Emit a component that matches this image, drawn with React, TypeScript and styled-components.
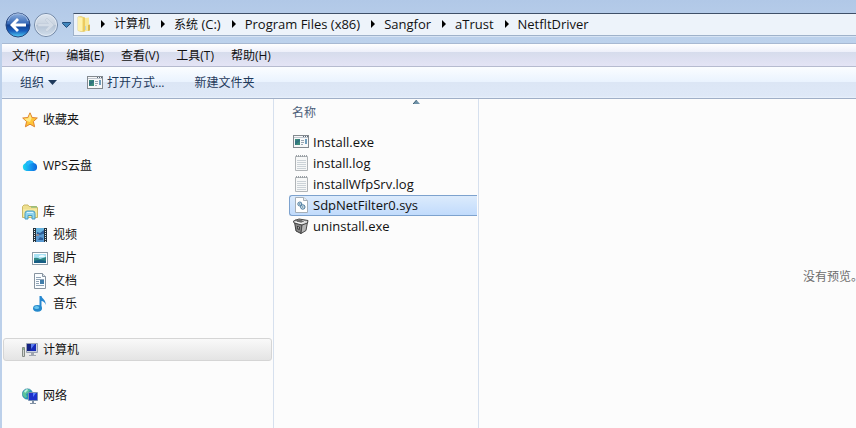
import React from "react";
import styled, { createGlobalStyle, css } from "styled-components";

const GlobalStyle = createGlobalStyle`
  * { box-sizing: border-box; }
  body { margin: 0; }
`;

const cjk = `"Noto Sans CJK SC", sans-serif`;

const Window = styled.div`
  display: flex;
  flex-direction: column;
  height: 100vh;
  overflow: hidden;
  background: #bcd0ea;
  font: 12px/16px "Open Sans", ${cjk};
  color: #111;
`;

const plainButton = css`
  border: 0;
  padding: 0;
  margin: 0;
  background: none;
  font: inherit;
  color: inherit;
  white-space: nowrap;
  cursor: default;
`;

const NavigationBar = styled.header`
  display: flex;
  flex: none;
  align-items: flex-start;
  height: 43px;
  padding: 13px 0 0 4px;
  background: linear-gradient(#b1c8e7, #bdd2ec);
`;

const NavButtons = styled.div`
  display: flex;
  align-items: center;
  width: 69px;
  flex: none;
`;

const NavButton = styled.button<{ $wide?: boolean }>`
  ${plainButton}
  display: flex;
  flex: none;
  justify-content: center;
  align-items: center;
  width: ${(p) => (p.$wide ? 28 : 13)}px;
  height: 24px;
`;

const AddressBar = styled.nav`
  display: flex;
  flex: 1;
  align-items: center;
  height: 23px;
  padding: 0 0 1px 3px;
  background: #edf3fa;
  border: 1px solid #9fb2ca;
  border-top-color: #3f5068;
  border-right: 0;
  box-shadow: 0 1px 0 #d6e3f4;
`;

const Crumb = styled.button`
  ${plainButton}
  white-space: pre;
`;

const Latin = styled.span`
  font-size: 13px;
`;

const CrumbArrow = styled.svg<{ $first?: boolean }>`
  flex: none;
  margin: 0 9px 0 ${(p) => (p.$first ? 8 : 11)}px;
`;

const MenuBar = styled.nav`
  display: flex;
  flex: none;
  align-items: center;
  gap: 17px;
  height: 24px;
  margin-left: 2px;
  padding: 2px 0 0 10px;
  border-top: 1px solid #a8b9d2;
  border-bottom: 1px solid #b6bbcf;
  background: linear-gradient(#fff 0, #eef0fa 35%, #d6dcec 36%, #e4e4f5 100%);
`;

const MenuItem = styled.button`
  ${plainButton}
`;

const Toolbar = styled.div`
  display: flex;
  flex: none;
  align-items: center;
  gap: 30px;
  height: 32px;
  margin-left: 2px;
  padding-left: 18px;
  border-bottom: 1px solid #a0afc7;
  background: linear-gradient(#fbfdff 0, #eaf3fe 48%, #dce6f5 49%, #dee8f7 94%, #e9f1fb 100%);
  color: #1e395b;
`;

const ToolButton = styled.button`
  ${plainButton}
  display: flex;
  align-items: center;
  gap: 4px;
`;

const Content = styled.main`
  display: flex;
  flex: 1;
  min-height: 0;
  margin-left: 2px;
  background: #fcfcfc;
`;

const Sidebar = styled.nav`
  display: flex;
  flex: none;
  flex-direction: column;
  gap: 23px;
  width: 272px;
  padding: 9px 1px 0;
  border-right: 1px solid #d6e0ee;
`;

const Group = styled.div`
  display: flex;
  flex-direction: column;
`;

const Place = styled.button<{ $nested?: boolean; $selected?: boolean }>`
  ${plainButton}
  display: flex;
  align-items: center;
  gap: 5px;
  height: 23px;
  padding-left: ${(p) => (p.$nested ? 28 : 18)}px;
  border: 1px solid transparent;
  border-radius: 3px;
  ${(p) =>
    p.$selected &&
    css`
      border-color: #d5d5d5;
      background: linear-gradient(#f9f9f9, #e4e4e4);
    `}
`;

const Files = styled.section`
  flex: none;
  width: 205px;
  padding: 0 1px 0 15px;
  border-right: 1px solid #d6e0ee;
`;

const FileTable = styled.table`
  width: 100%;
  border-collapse: collapse;
`;

const NameHeader = styled.th`
  position: relative;
  height: 33px;
  padding: 0 0 6px 3px;
  color: #4c607a;
  font-weight: 400;
  text-align: left;
`;

const SortArrow = styled.svg`
  position: absolute;
  top: 1px;
  left: 124px;
`;

const FileCell = styled.td`
  padding: 0;
`;

const FileButton = styled.button<{ $selected?: boolean }>`
  ${plainButton}
  display: flex;
  align-items: center;
  gap: 4px;
  width: 100%;
  height: 21px;
  padding: 0 0 1px 3px;
  border: 1px solid transparent;
  border-right: 0;
  border-radius: 3px 0 0 3px;
  font-size: 13px;
  ${(p) =>
    p.$selected &&
    css`
      border-color: #7da2ce;
      background: linear-gradient(#dcebfc, #c1dbfc);
    `}
`;

const Preview = styled.section`
  flex: 1;
  min-width: 0;
  overflow: hidden;
`;

const PreviewMessage = styled.p`
  display: flex;
  align-items: center;
  justify-content: center;
  min-width: 708px;
  min-height: 356px;
  margin: 0;
  color: #6d6d6d;
`;

const Icon = ({ children }: { children: React.ReactNode }) => (
  <svg width="16" height="16" viewBox="0 0 16 16" aria-hidden="true">
    {children}
  </svg>
);

const BackIcon = () => (
  <svg width="26" height="26" viewBox="0 0 26 26" aria-hidden="true">
    <defs>
      <linearGradient id="back" x2="0" y2="1">
        <stop offset="0" stopColor="#91b2df" />
        <stop offset=".45" stopColor="#3668b6" />
        <stop offset=".5" stopColor="#12408f" />
        <stop offset=".75" stopColor="#1a5fbd" />
        <stop offset="1" stopColor="#52d0f6" />
      </linearGradient>
    </defs>
    <circle cx="13" cy="13" r="12" fill="url(#back)" stroke="#29477e" />
    <path d="M3 9a10.500 10.500 0 0 1 20 0" fill="none" stroke="#c5d6ee" strokeOpacity=".7" />
    <path d="M5 13l7-7 2 2-3.500 3.500H21v3H10.500L14 18l-2 2z" fill="#fff" />
  </svg>
);

const ForwardIcon = () => (
  <svg width="26" height="26" viewBox="0 0 26 26" aria-hidden="true">
    <defs>
      <linearGradient id="forward" x2="0" y2="1">
        <stop offset="0" stopColor="#dde6f0" />
        <stop offset=".48" stopColor="#c9d3df" />
        <stop offset=".5" stopColor="#b3c2d4" />
        <stop offset="1" stopColor="#d2dfec" />
      </linearGradient>
    </defs>
    <circle cx="13" cy="13" r="11.500" fill="url(#forward)" stroke="#7288a6" />
    <circle cx="13" cy="13" r="10.500" fill="none" stroke="#e6eef7" strokeOpacity=".8" />
    <path d="M21 13l-7-7-2 2 3.500 3.500H5v3h10.500L12 18l2 2z" fill="#d3dce7" stroke="#bac7d6" strokeWidth=".5" />
  </svg>
);

const HistoryIcon = () => (
  <svg width="9" height="6" viewBox="0 0 9 6" aria-hidden="true">
    <path d="M.5.500h8v1L4.500 5.500.5 1.500z" fill="#4086bd" stroke="#234f7d" />
  </svg>
);

const FolderIcon = () => (
  <Icon>
    <path d="M1 1l3-.5 4 1.500v13l-3 .8-4-1.300z" fill="#f7e389" stroke="#dfc25a" strokeWidth=".6" />
    <path d="M1 1l4 1v13.200l-4-.8z" fill="#fff2ad" />
    <path d="M6 1.500l5 1v12l-5 1z" fill="#eccb60" />
    <path d="M8 2l4-.5V14l-4 1.500z" fill="#f8e898" />
    <path d="M11 9l2-.5v6l-2 .5z" fill="#d9b750" />
    <path d="M8.500 10v4" stroke="#b9d3d9" />
  </Icon>
);

const AppIcon = () => (
  <Icon>
    <rect x=".5" y="1.500" width="15" height="12" fill="#f7f8f9" stroke="#83898f" />
    <path d="M1 3.500h14" stroke="#c0c6ce" />
    <path d="M10 2.500h1m1 0h1m1 0h1" stroke="#596877" />
    <rect x="2" y="5" width="5" height="6" fill="#3d8b7b" />
    <path d="M2 11V7l5-2v2z" fill="#317380" />
    <path d="M8 6.500h3M8 8.500h3M8 10.500h2" stroke="#9ba7b2" />
    <path d="M13 5v5" stroke="#4380a9" strokeWidth="1.500" />
  </Icon>
);

const StarIcon = () => (
  <Icon>
    <path d="M8 .8l2.100 4.700 5.200.5-3.900 3.500 1.200 5.300L8 12.200l-4.600 2.600 1.200-5.300L.7 6l5.200-.5z" fill="#ffc538" stroke="#df8430" strokeLinejoin="round" />
    <path d="M8 2l1.500 4.200L8 10 4.900 9 2 6.700l4.300-.5z" fill="#ffe985" />
  </Icon>
);

const CloudIcon = () => (
  <Icon>
    <defs>
      <linearGradient id="cloud">
        <stop offset="0" stopColor="#1cd9ef" />
        <stop offset=".5" stopColor="#159bf2" />
        <stop offset="1" stopColor="#0b65db" />
      </linearGradient>
    </defs>
    <path d="M4.500 13A4 4 0 0 1 3.400 5.300 4.700 4.700 0 0 1 11.800 5a4.100 4.100 0 0 1 .2 8z" fill="url(#cloud)" />
    <path d="M3.400 5.300A4.700 4.700 0 0 1 11.800 5C9 5 7 6 6 8 5 6 4 5.500 3.400 5.300z" fill="#23b6fb" />
  </Icon>
);

const LibraryIcon = () => (
  <Icon>
    <path d="M.5 2.500L2 1h4l1 1.500h7l1.500 1v10H.5z" fill="#efe090" stroke="#cbb966" />
    <path d="M9 3h6" stroke="#91bd7b" strokeWidth="1.500" />
    <path d="M1 5h14v8H1z" fill="#f5e99f" />
    <path d="M3 15V9.500Q3 7 5 7h6q2 0 2 2.500V15h-3v-3.500H6V15z" fill="#91d5ef" stroke="#4b9bbd" />
    <path d="M5 8.500h6" stroke="#d9f5ff" />
  </Icon>
);

const VideoIcon = () => (
  <Icon>
    <path d="M1 1h14v14H1z" fill="#25313a" />
    <path d="M4 1h8v7H4z" fill="#68b4df" />
    <path d="M4 8h8v7H4z" fill="#5a9ad2" />
    <path d="M5 5l3 1 4-3v4l-4 1-3-1zM6 13l2-3 3 1v2z" fill="#2f5f9b" />
    <path d="M4 8h3" stroke="#be7d65" />
    <path d="M2.500 2v13M13.500 2v13" stroke="#e8eff2" strokeDasharray="1 1" />
  </Icon>
);

const PictureIcon = () => (
  <Icon>
    <rect x=".5" y="2.500" width="15" height="12" fill="#fff" stroke="#8d9ca7" />
    <path d="M2 4h12v9H2z" fill="#a9e2f4" />
    <path d="M2 8q3-1 6 1 3-1 6-2v6H2z" fill="#2e8783" />
    <path d="M2 11q5-2 12 0v2H2z" fill="#185e84" />
    <path d="M7 6q3-2 6 0v1H7z" fill="#effcff" />
  </Icon>
);

const DocumentIcon = () => (
  <Icon>
    <path d="M2.500.5h8l3 3v12h-11z" fill="#fafdff" stroke="#87939f" />
    <path d="M10.500.5v3h3" fill="#dbe4ec" stroke="#87939f" />
    <path d="M4 4.500h5M4 6.500h8M4 8.500h3M4 10.500h3M4 12.500h8" stroke="#91a4b6" />
    <path d="M8 7h4v4H8z" fill="#407daa" />
  </Icon>
);

const MusicIcon = () => (
  <Icon>
    <path d="M7.500 12V0h2c.5 3 5 4 4 9-.5-3-2.500-4-4-4v7z" fill="#2687cf" />
    <ellipse cx="5.500" cy="12.300" rx="4.500" ry="3.400" fill="#2589cc" />
    <ellipse cx="4.600" cy="11.400" rx="2.500" ry="1.500" fill="#69c6ee" />
  </Icon>
);

const ComputerIcon = () => (
  <Icon>
    <path d="M.5 5.500h2v9h-2z" fill="#d3d6d3" stroke="#858b85" />
    <path d="M1 7h1" stroke="#47a848" />
    <path d="M4.500 1.500h11v9h-11z" fill="#c9d0df" stroke="#9aa2b4" />
    <path d="M5 2h9v7H5z" fill="#1629b7" />
    <path d="M5 2h5L8 9H5z" fill="#132182" />
    <path d="M9 2h4l-4 5z" fill="#5c7ef1" />
    <path d="M9 11h3v2h2v1H7v-1h2z" fill="#a0a6b1" />
  </Icon>
);

const NetworkIcon = () => (
  <Icon>
    <circle cx="5.500" cy="6" r="5.300" fill="#2494b8" stroke="#4187a0" strokeWidth=".5" />
    <path d="M1 4l4-3 3 1-2 3-2 1 1 3-2 1L.7 7z" fill="#5bc39a" />
    <path d="M2 3l3-2 1 1-3 3z" fill="#c0f3e2" />
    <path d="M6.500 4.500h9v8h-9z" fill="#b6c6dd" stroke="#7890b0" />
    <path d="M7 5h8v7H7z" fill="#1a31cc" />
    <path d="M11 5h3l-3 4z" fill="#577fff" />
    <path d="M10 13h2v2h2v1H8v-1h2z" fill="#8191a5" />
  </Icon>
);

const LogIcon = () => (
  <Icon>
    <path d="M2.500 1.500h12v14h-12z" fill="#f7f8f8" stroke="#b0b4b7" />
    <path d="M3 1h11" stroke="#9ba1a6" strokeWidth="2" strokeDasharray="1 1" />
    <path d="M4 5.500h9M4 7.500h9M4 9.500h9M4 11.500h9M4 13.500h9" stroke="#cbd2d7" />
  </Icon>
);

const SystemIcon = () => (
  <Icon>
    <path d="M2.500.5h8l4 3v12h-12z" fill="#fff" stroke="#a5afb8" />
    <path d="M10.500.5v3h4" fill="#e5ebf0" stroke="#a5afb8" />
    <circle cx="6.800" cy="7" r="2" fill="#dcecf5" stroke="#4b7ba0" />
    <circle cx="9.800" cy="10" r="2.200" fill="#e8f3f8" stroke="#3f7096" />
    <circle cx="6.800" cy="7" r=".7" fill="#386985" />
    <circle cx="9.800" cy="10" r=".7" fill="#386985" />
  </Icon>
);

const UninstallIcon = () => (
  <Icon>
    <path d="M1.500 4L9 6.500 8 15.500 3 13z" fill="#858585" stroke="#3a3a3a" />
    <path d="M9 6.500L14.500 4 13 12.500l-5 3z" fill="#b5b5b5" stroke="#4a4a4a" />
    <path d="M.5 3L6 1l9 1.500-.5 2.500L9 7 1 5z" fill="#d6d6d6" stroke="#444" />
    <path d="M2 1l3 1 2-1 3 2 3-1-3 3-6-1z" fill="#6a6a6a" />
    <path d="M3 4l5 1.500 4-2" fill="none" stroke="#fff" />
    <path d="M4 8l3 1-.5 3L4 11z" fill="#303030" />
    <path d="M5 9l1 .5-.4 1.200-1-.5z" fill="#ddd" />
  </Icon>
);

const crumbs = [
  { chinese: "计算机" },
  { chinese: "系统", latin: " (C:)" },
  { latin: "Program Files (x86)" },
  { latin: "Sangfor" },
  { latin: "aTrust" },
  { latin: "NetfltDriver" },
] as { chinese?: string; latin?: string }[];

const menus = ["文件(F)", "编辑(E)", "查看(V)", "工具(T)", "帮助(H)"];

const places = [
  [{ label: "收藏夹", icon: <StarIcon /> }],
  [{ label: "WPS云盘", icon: <CloudIcon /> }],
  [
    { label: "库", icon: <LibraryIcon /> },
    { label: "视频", icon: <VideoIcon />, nested: true },
    { label: "图片", icon: <PictureIcon />, nested: true },
    { label: "文档", icon: <DocumentIcon />, nested: true },
    { label: "音乐", icon: <MusicIcon />, nested: true },
  ],
  [{ label: "计算机", icon: <ComputerIcon />, selected: true }],
  [{ label: "网络", icon: <NetworkIcon /> }],
] as { label: string; icon: React.ReactNode; nested?: boolean; selected?: boolean }[][];

const files = [
  { name: "Install.exe", icon: <AppIcon /> },
  { name: "install.log", icon: <LogIcon /> },
  { name: "installWfpSrv.log", icon: <LogIcon /> },
  { name: "SdpNetFilter0.sys", icon: <SystemIcon />, selected: true },
  { name: "uninstall.exe", icon: <UninstallIcon /> },
];

export default function App() {
  return (
    <Window>
      <GlobalStyle />
      <NavigationBar>
        <NavButtons>
          <NavButton $wide aria-label="后退"><BackIcon /></NavButton>
          <NavButton $wide aria-label="前进"><ForwardIcon /></NavButton>
          <NavButton aria-label="历史记录"><HistoryIcon /></NavButton>
        </NavButtons>
        <AddressBar aria-label="地址">
          <FolderIcon />
          {crumbs.map((crumb, index) => (
            <React.Fragment key={index}>
              <CrumbArrow $first={index === 0} width="4" height="8" viewBox="0 0 4 8" aria-hidden="true">
                <path d="M0 0l4 4-4 4z" fill="#000" />
              </CrumbArrow>
              <Crumb>
                {crumb.chinese}
                {crumb.latin && <Latin>{crumb.latin}</Latin>}
              </Crumb>
            </React.Fragment>
          ))}
        </AddressBar>
      </NavigationBar>
      <MenuBar aria-label="菜单">
        {menus.map((label) => <MenuItem key={label}>{label}</MenuItem>)}
      </MenuBar>
      <Toolbar>
        <ToolButton>
          组织
          <svg width="9" height="5" viewBox="0 0 9 5" aria-hidden="true">
            <path d="M0 0h9L4.500 5z" fill="#1e395b" />
          </svg>
        </ToolButton>
        <ToolButton><AppIcon />打开方式...</ToolButton>
        <ToolButton>新建文件夹</ToolButton>
      </Toolbar>
      <Content>
        <Sidebar aria-label="导航">
          {places.map((group) => (
            <Group key={group[0].label}>
              {group.map((place) => (
                <Place key={place.label} $nested={place.nested} $selected={place.selected}>
                  {place.icon}
                  {place.label}
                </Place>
              ))}
            </Group>
          ))}
        </Sidebar>
        <Files>
          <FileTable>
            <thead>
              <tr>
                <NameHeader scope="col">
                  名称
                  <SortArrow width="7" height="4" viewBox="0 0 7 4" aria-hidden="true">
                    <path d="M0 4l3.500-4L7 4z" fill="#6f92a8" />
                    <path d="M0 4l3.500-4" stroke="#3c5e72" />
                  </SortArrow>
                </NameHeader>
              </tr>
            </thead>
            <tbody>
              {files.map((file) => (
                <tr key={file.name}>
                  <FileCell>
                    <FileButton $selected={file.selected}>
                      {file.icon}
                      {file.name}
                    </FileButton>
                  </FileCell>
                </tr>
              ))}
            </tbody>
          </FileTable>
        </Files>
        <Preview>
          <PreviewMessage>没有预览。</PreviewMessage>
        </Preview>
      </Content>
    </Window>
  );
}
